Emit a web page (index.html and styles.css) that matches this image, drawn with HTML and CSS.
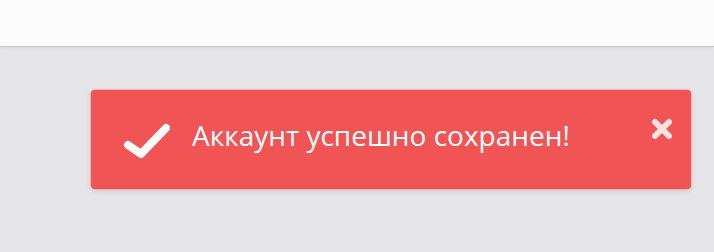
FILE: index.html
```html
<!DOCTYPE html>
<html lang="ru">
<head>
<meta charset="utf-8">
<link rel="stylesheet" href="styles.css">
</head>
<body>
<header class="topbar"></header>
<main class="content">
  <div class="toast">
    <svg class="toast-icon" width="50" height="40" viewBox="0 0 50 40">
      <path d="M8 25 L21 34 L46 8" fill="none" stroke="#fff" stroke-width="8" stroke-linecap="round" stroke-linejoin="round"/>
    </svg>
    <span class="toast-text">Аккаунт успешно сохранен!</span>
    <svg class="toast-close" width="24" height="24" viewBox="0 0 24 24">
      <path d="M5 5 L19 19 M19 5 L5 19" stroke="#fbe1e1" stroke-width="6" stroke-linecap="round"/>
    </svg>
  </div>
</main>
</body>
</html>
```
FILE: styles.css
```css
html, body {
  margin: 0;
  padding: 0;
}
body {
  width: 714px;
  height: 252px;
  overflow: hidden;
  background: #e6e6e8;
  font-family: "Open Sans", "Liberation Sans", sans-serif;
}
.topbar {
  height: 46px;
  background: #fbfbfb;
  border-bottom: 1px solid #c6c6c8;
  box-shadow: 0 1px 3px rgba(0,0,0,0.06);
}
.content {
  padding: 43px 23px 0 91px;
}
.toast {
  height: 99px;
  width: 600px;
  box-sizing: border-box;
  background: #f05455;
  border-radius: 4px;
  box-shadow: 0 0 0 1px rgba(248,140,140,0.45), 0 2px 6px rgba(0,0,0,0.12);
  display: flex;
  align-items: flex-start;
  padding: 0 17px 0 29px;
}
.toast-icon {
  flex: none;
  margin-right: 22px;
  margin-top: 30px;
}
.toast-text {
  flex: 1;
  color: #fff;
  font-size: 28px;
  line-height: normal;
  margin-top: 26px;
  white-space: nowrap;
}
.toast-close {
  flex: none;
  margin-top: 27px;
}
```
